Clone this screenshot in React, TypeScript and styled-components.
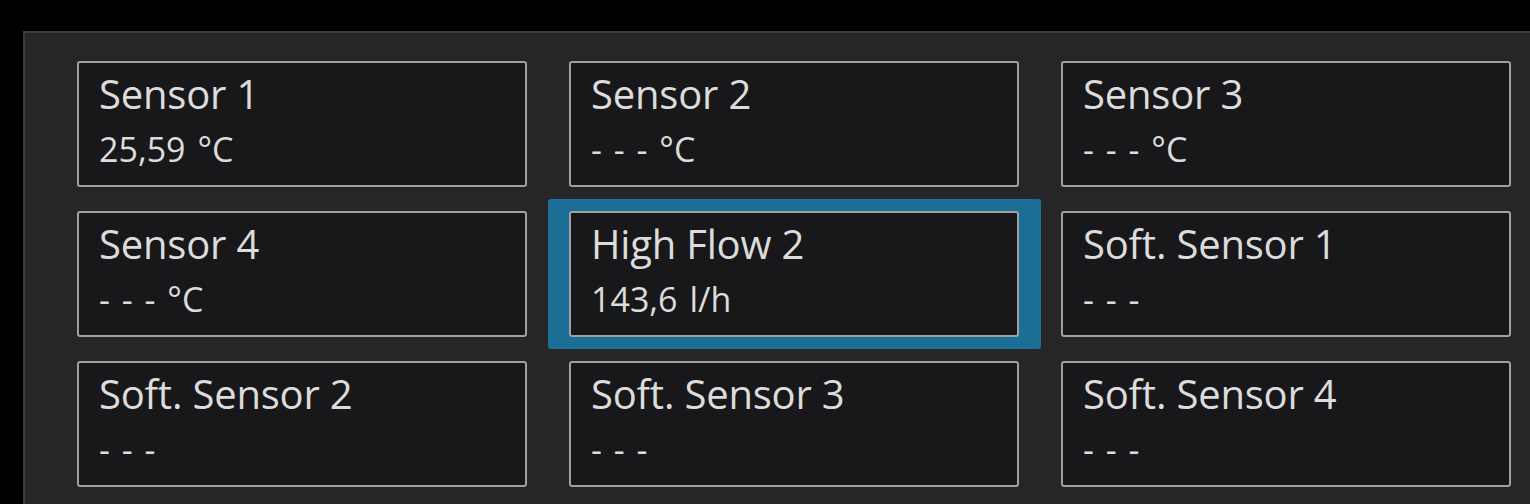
import React from "react";
import styled, { createGlobalStyle } from "styled-components";

const Global = createGlobalStyle`
  html, body {
    margin: 0;
    padding: 0;
    background: #000000;
    overflow: hidden;
  }
  body {
    font-family: "Open Sans", "Noto Sans", sans-serif;
  }
`;

const Screen = styled.div`
  width: 1530px;
  height: 504px;
  overflow: hidden;
  background: #000000;
  padding: 31px 0 0 23px;
  box-sizing: border-box;
`;

const Panel = styled.div`
  width: 1560px;
  height: 520px;
  box-sizing: border-box;
  background: #262628;
  border-top: 2px solid #3d3d3f;
  border-left: 2px solid #3d3d3f;
  padding: 28px 0 0 52px;
`;

const Grid = styled.div`
  display: grid;
  grid-template-columns: repeat(3, 450px);
  grid-auto-rows: 126px;
  column-gap: 42px;
  row-gap: 24px;
`;

const Card = styled.div<{ $selected?: boolean }>`
  position: relative;
  box-sizing: border-box;
  background: #18181a;
  border: 2px solid #a0a0a2;
  border-radius: 3px;
  padding: 3px 20px 0 20px;
  color: #dcdcdc;
  z-index: 0;

  &::before {
    content: "";
    display: ${(p) => (p.$selected ? "block" : "none")};
    position: absolute;
    top: -14px;
    bottom: -14px;
    left: -23px;
    right: -24px;
    background: #1b6e95;
    border-radius: 3px;
    z-index: -2;
  }

  &::after {
    content: "";
    display: ${(p) => (p.$selected ? "block" : "none")};
    position: absolute;
    inset: -2px;
    border-radius: 3px;
    border: 2px solid #a0a0a2;
    background: #18181a;
    z-index: -1;
  }
`;

const Title = styled.div`
  font-size: 40px;
  line-height: 56px;
  white-space: nowrap;
  letter-spacing: -0.2px;
`;

const Value = styled.div`
  font-size: 34px;
  line-height: 54px;
  white-space: nowrap;
  word-spacing: 3px;
`;

const sensors = [
  { title: "Sensor 1", value: "25,59 °C" },
  { title: "Sensor 2", value: "- - - °C" },
  { title: "Sensor 3", value: "- - - °C" },
  { title: "Sensor 4", value: "- - - °C" },
  { title: "High Flow 2", value: "143,6 l/h", selected: true },
  { title: "Soft. Sensor 1", value: "- - -" },
  { title: "Soft. Sensor 2", value: "- - -" },
  { title: "Soft. Sensor 3", value: "- - -" },
  { title: "Soft. Sensor 4", value: "- - -" },
];

export default function App() {
  return (
    <>
      <Global />
      <Screen>
        <Panel>
          <Grid>
            {sensors.map((s) => (
              <Card key={s.title} $selected={s.selected}>
                <Title>{s.title}</Title>
                <Value>{s.value}</Value>
              </Card>
            ))}
          </Grid>
        </Panel>
      </Screen>
    </>
  );
}
